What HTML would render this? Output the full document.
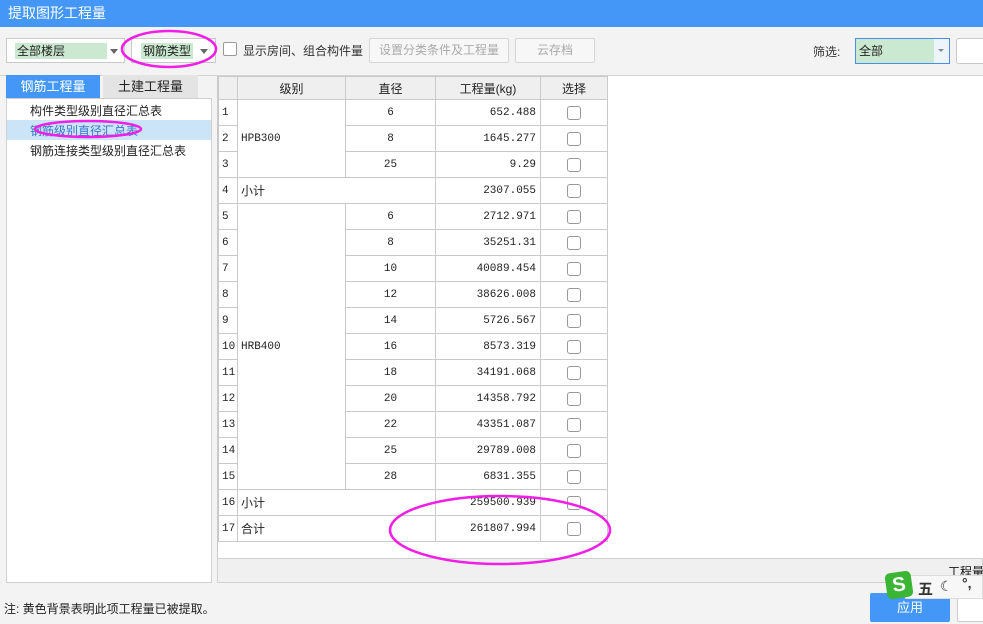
<!DOCTYPE html>
<html><head><meta charset="utf-8"><style>
*{box-sizing:border-box;margin:0;padding:0}
body{width:983px;height:624px;overflow:hidden;background:#f3f3f3;position:relative;font-family:"Liberation Sans","Noto Sans CJK SC",sans-serif;font-size:12px;color:#222}
.abs{position:absolute}
.title{left:0;top:0;width:983px;height:27px;background:#4497f7;color:#fff;font-size:14px;line-height:27px;padding-left:8px}
.sel{background:#fff;border:1px solid #c9c9c9;height:25px}
.hl{position:absolute;background:#cbe8d0;top:4px;height:16px;line-height:16px;font-size:12px;padding-left:2px}
.arr{position:absolute;width:0;height:0;border-left:4px solid transparent;border-right:4px solid transparent;border-top:5px solid #666}
.btn{border:1px solid #d6d6d6;background:#f7f7f7;color:#aaa;text-align:center;line-height:23px;height:25px;border-radius:2px}
table{border-collapse:collapse;font-family:"Liberation Mono","Noto Sans CJK SC",monospace;font-size:11px;table-layout:fixed}
td,th{border:1px solid #c9c9c9;height:26px;padding:0}
th{background:#efefef;font-weight:normal;height:23px;font-family:"Liberation Sans","Noto Sans CJK SC",sans-serif;font-size:12px}
td.n{padding-left:3px;text-align:left;background:#fff}
td.c{text-align:center}
td.r{text-align:right;padding-right:4px}
.cb{display:inline-block;width:14px;height:14px;border:1px solid #999;border-radius:3px;background:#fff;vertical-align:middle}
</style></head><body>
<div class="abs title">提取图形工程量</div>
<div class="abs" style="left:0;top:75px;width:983px;height:1px;background:#d4d4d4"></div>

<div class="abs sel" style="left:6px;top:38px;width:119px">
 <div class="hl" style="left:8px;width:92px">全部楼层</div><div class="arr" style="left:103px;top:10px"></div></div>
<div class="abs sel" style="left:131px;top:38px;width:85px">
 <div class="hl" style="left:9px;width:52px">钢筋类型</div><div class="arr" style="left:68px;top:10px"></div></div>
<div class="abs" style="left:223px;top:42px;width:14px;height:14px;border:1px solid #999;background:#fff;border-radius:2px"></div>
<div class="abs" style="left:243px;top:42px;color:#333;font-size:12px">显示房间、组合构件量</div>
<div class="abs btn" style="left:369px;top:38px;width:140px">设置分类条件及工程量</div>
<div class="abs btn" style="left:515px;top:38px;width:80px">云存档</div>
<div class="abs" style="left:813px;top:43px;color:#333">筛选:</div>
<div class="abs" style="left:855px;top:38px;width:95px;height:26px;border:1px solid #4a90e2;background:#eef4fc">
 <div style="position:absolute;left:0;top:0;width:78px;height:24px;background:#cbe8d0;line-height:24px;padding-left:3px">全部</div>
 <div class="arr" style="left:82px;top:10px;border-top-color:#888;border-left-width:3px;border-right-width:3px;border-top-width:3px"></div></div>
<div class="abs" style="left:956px;top:38px;width:40px;height:26px;border:1px solid #c9c9c9;background:#fff;border-radius:3px"></div>

<div class="abs" style="left:6px;top:75px;width:94px;height:24px;background:#4497f7;color:#fff;text-align:center;line-height:24px;font-size:13px">钢筋工程量</div>
<div class="abs" style="left:103px;top:75px;width:95px;height:24px;background:#e4e4e4;color:#222;text-align:center;line-height:24px;font-size:13px">土建工程量</div>
<div class="abs" style="left:6px;top:98px;width:206px;height:485px;background:#fff;border:1px solid #d0d0d0"></div>
<div class="abs" style="left:30px;top:102px;font-size:12px">构件类型级别直径汇总表</div>
<div class="abs" style="left:7px;top:120px;width:204px;height:20px;background:#cce4f7"></div>
<div class="abs" style="left:30px;top:122px;font-size:12px;color:#3a78c8">钢筋级别直径汇总表</div>
<div class="abs" style="left:30px;top:142px;font-size:12px">钢筋连接类型级别直径汇总表</div>

<div class="abs" style="left:217px;top:76px;width:766px;height:482px;background:#fff;border-left:1px solid #c9c9c9"></div>
<div class="abs" style="left:217px;top:558px;width:766px;height:25px;background:#f0f0f0;border:1px solid #d0d0d0"></div>
<table class="abs" style="left:218px;top:76px;width:389px">
<colgroup><col style="width:19px"><col style="width:108px"><col style="width:90px"><col style="width:105px"><col style="width:67px"></colgroup>
<tr><th></th><th>级别</th><th>直径</th><th>工程量(kg)</th><th>选择</th></tr>
<tr><td class="n">1</td><td class="n" rowspan="3">HPB300</td><td class="c">6</td><td class="r">652.488</td><td class="c"><span class="cb"></span></td></tr>
<tr><td class="n">2</td><td class="c">8</td><td class="r">1645.277</td><td class="c"><span class="cb"></span></td></tr>
<tr><td class="n">3</td><td class="c">25</td><td class="r">9.29</td><td class="c"><span class="cb"></span></td></tr>
<tr><td class="n">4</td><td class="n" colspan="2" style="font-family:'Liberation Sans','Noto Sans CJK SC',sans-serif;font-size:12px">小计</td><td class="r">2307.055</td><td class="c"><span class="cb"></span></td></tr>
<tr><td class="n">5</td><td class="n" rowspan="11">HRB400</td><td class="c">6</td><td class="r">2712.971</td><td class="c"><span class="cb"></span></td></tr>
<tr><td class="n">6</td><td class="c">8</td><td class="r">35251.31</td><td class="c"><span class="cb"></span></td></tr>
<tr><td class="n">7</td><td class="c">10</td><td class="r">40089.454</td><td class="c"><span class="cb"></span></td></tr>
<tr><td class="n">8</td><td class="c">12</td><td class="r">38626.008</td><td class="c"><span class="cb"></span></td></tr>
<tr><td class="n">9</td><td class="c">14</td><td class="r">5726.567</td><td class="c"><span class="cb"></span></td></tr>
<tr><td class="n">10</td><td class="c">16</td><td class="r">8573.319</td><td class="c"><span class="cb"></span></td></tr>
<tr><td class="n">11</td><td class="c">18</td><td class="r">34191.068</td><td class="c"><span class="cb"></span></td></tr>
<tr><td class="n">12</td><td class="c">20</td><td class="r">14358.792</td><td class="c"><span class="cb"></span></td></tr>
<tr><td class="n">13</td><td class="c">22</td><td class="r">43351.087</td><td class="c"><span class="cb"></span></td></tr>
<tr><td class="n">14</td><td class="c">25</td><td class="r">29789.008</td><td class="c"><span class="cb"></span></td></tr>
<tr><td class="n">15</td><td class="c">28</td><td class="r">6831.355</td><td class="c"><span class="cb"></span></td></tr>
<tr><td class="n">16</td><td class="n" colspan="2" style="font-family:'Liberation Sans','Noto Sans CJK SC',sans-serif;font-size:12px">小计</td><td class="r">259500.939</td><td class="c"><span class="cb"></span></td></tr>
<tr><td class="n">17</td><td class="n" colspan="2" style="font-family:'Liberation Sans','Noto Sans CJK SC',sans-serif;font-size:12px">合计</td><td class="r">261807.994</td><td class="c"><span class="cb"></span></td></tr>
</table>

<div class="abs" style="left:948px;top:563px;font-size:12px;color:#111;white-space:nowrap">工程量</div>
<div class="abs" style="left:4px;top:600px;font-size:12px;color:#222">注: 黄色背景表明此项工程量已被提取。</div>
<div class="abs" style="left:870px;top:593px;width:80px;height:29px;background:#4497f7;color:#fff;text-align:center;line-height:29px;font-size:13px;border-radius:2px">应用</div>
<div class="abs" style="left:957px;top:593px;width:30px;height:29px;background:#fff;border:1px solid #ccc;border-radius:2px"></div>
<div class="abs" style="left:905px;top:575px;width:78px;height:24px;background:#f7f7f7;border:1px solid #ddd"></div>
<div class="abs" style="left:886px;top:572px;width:26px;height:26px;background:#3bb534;border-radius:5px;transform:rotate(-8deg);color:#fff;font-weight:bold;font-size:20px;text-align:center;line-height:26px">S</div>
<div class="abs" style="left:918px;top:578px;font-size:15px;font-weight:bold;color:#333">五</div>
<div class="abs" style="left:940px;top:578px;font-size:14px;color:#333">☾</div>
<div class="abs" style="left:962px;top:575px;font-size:14px;font-weight:bold;color:#333">°,</div>

<svg class="abs" style="left:0;top:0" width="983" height="624">
<g fill="none" stroke="#f01ee6" stroke-width="2.5">
<ellipse cx="169" cy="49" rx="47" ry="18"/>
<ellipse cx="88" cy="129" rx="53" ry="8"/>
<ellipse cx="500" cy="530" rx="110" ry="34"/>
</g></svg>
</body></html>
